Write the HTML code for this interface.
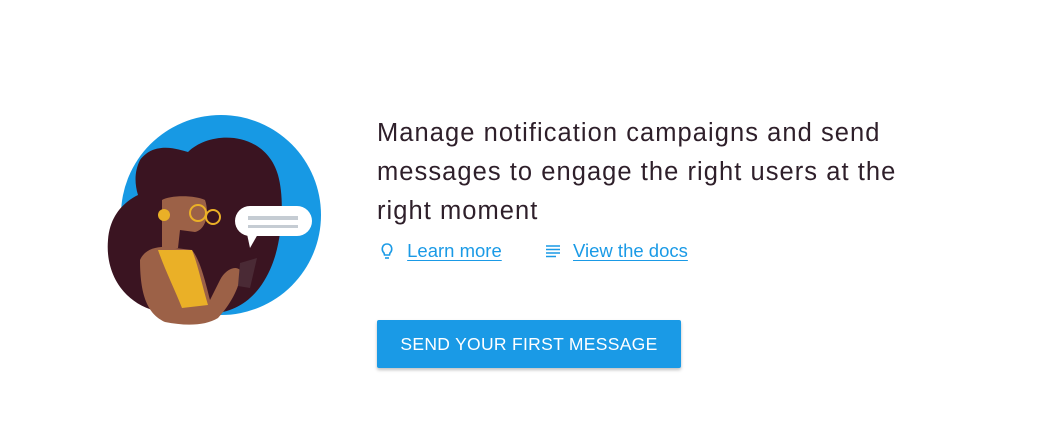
<!DOCTYPE html>
<html><head><style>
body{margin:0;width:1037px;height:443px;background:#fff;font-family:"Liberation Sans",sans-serif;position:relative;overflow:hidden}
.t{position:absolute;left:377px;top:114px;font-size:25.5px;letter-spacing:1.05px;line-height:39px;color:#2e1f2a;white-space:nowrap}
.links{position:absolute;left:380px;top:240px;font-size:18.5px;color:#1a9ae6;white-space:nowrap}
.links a{color:#1a9ae6;text-decoration:underline;text-underline-offset:3px}
.btn{position:absolute;left:377px;top:320px;width:304px;height:48px;background:#1a9ae6;border-radius:2px;box-shadow:0 2px 3px rgba(0,0,0,.25);color:#fff;font-size:17.5px;letter-spacing:.3px;line-height:48px;text-align:center}
</style></head><body>
<svg style="position:absolute;left:100px;top:100px" width="230" height="240" viewBox="0 0 230 240">
<circle cx="121" cy="115" r="100" fill="#1799e4"/>
<path d="M40 60 C55 40 80 50 88 52 C110 30 165 30 178 75 C185 100 182 140 172 165 C160 195 140 212 110 214 L60 212 C25 205 5 175 8 140 C10 112 28 100 38 95 C34 82 35 70 40 60Z" fill="#3a1421"/>
<path d="M62 100 C70 95 95 95 105 100 C110 115 105 130 95 132 L80 130 L78 148 L62 150 Z" fill="#9c6147"/>
<path d="M40 160 C45 148 60 145 75 148 L92 150 C100 160 105 180 110 200 L120 180 C125 170 135 165 140 170 C142 185 130 205 118 218 C105 226 85 226 65 222 C50 215 40 200 40 160Z" fill="#9c6147"/>
<path d="M58 150 L92 150 C98 165 102 185 108 205 L82 208 C75 190 65 170 58 150Z" fill="#eab027"/>
<path d="M140 163 L157 158 L150 188 L138 186Z" fill="#4a2a35"/>
<circle cx="64" cy="115" r="6" fill="#eab027"/>
<circle cx="98" cy="113" r="8" fill="none" stroke="#eab027" stroke-width="2"/>
<circle cx="113" cy="117" r="7" fill="none" stroke="#eab027" stroke-width="2"/>
<rect x="135" y="106" width="77" height="30" rx="15" fill="#fff"/>
<path d="M147 134 L150 148 L158 134Z" fill="#fff"/>
<rect x="148" y="116" width="50" height="4" fill="#c5ccd3"/>
<rect x="148" y="125" width="50" height="3" fill="#c5ccd3"/>
</svg>
<div class="t">Manage notification campaigns and send<br>messages to engage the right users at the<br>right moment</div>
<div class="links">
<svg width="14" height="18" viewBox="0 0 14 18" style="vertical-align:-3px"><path d="M4 11 C1 8 2 2 7 2 C12 2 13 8 10 11 L9.5 13 L4.5 13Z" fill="none" stroke="#1a9ae6" stroke-width="1.6"/><path d="M5 16 H9" stroke="#1a9ae6" stroke-width="1.6"/></svg>
<a style="margin-left:8px">Learn more</a>
<svg width="16" height="14" viewBox="0 0 16 14" style="margin-left:38px;vertical-align:-1px"><path d="M1 2H15M1 5.5H15M1 9H15M1 12.5H11" stroke="#1a9ae6" stroke-width="1.5"/></svg>
<a style="margin-left:7px">View the docs</a>
</div>
<div class="btn">SEND YOUR FIRST MESSAGE</div>
</body></html>
